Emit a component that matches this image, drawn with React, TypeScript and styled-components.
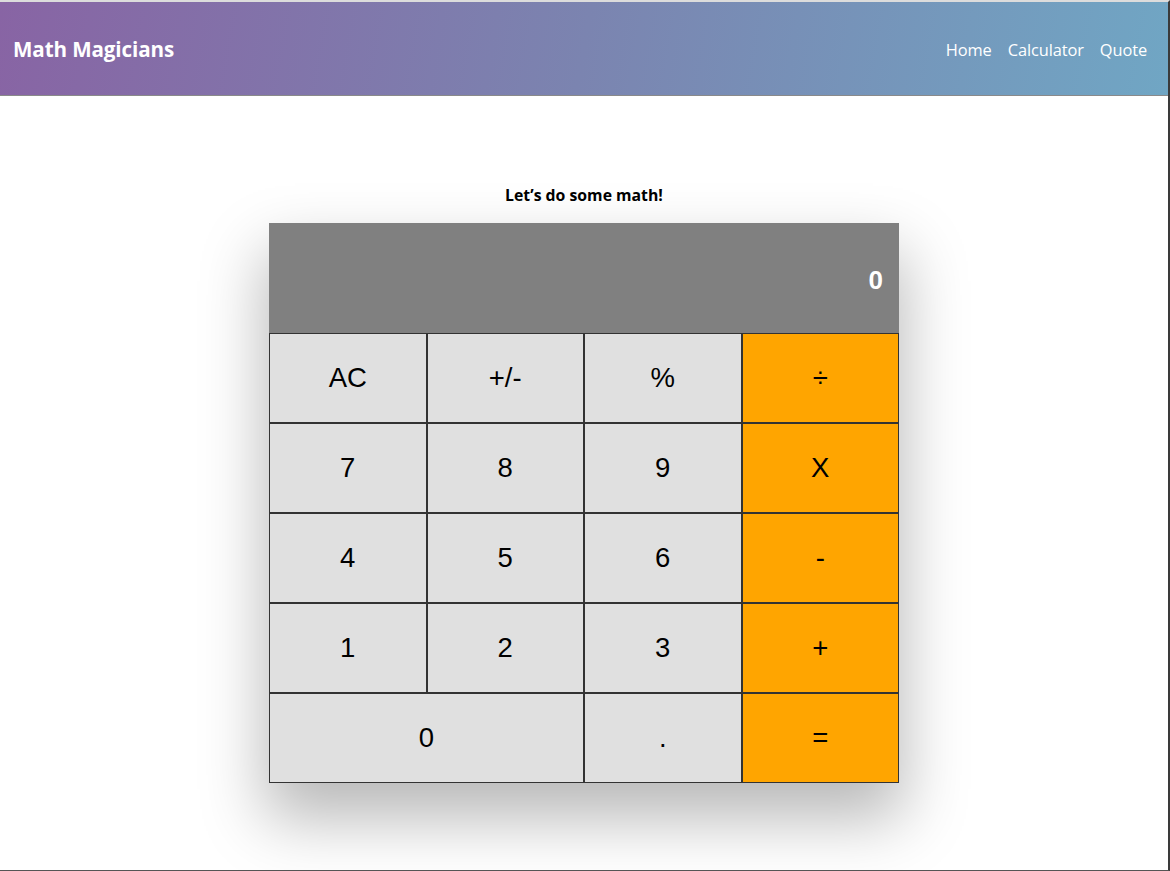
import React from "react";
import styled, { createGlobalStyle } from "styled-components";

const Global = createGlobalStyle`
  html, body { margin: 0; padding: 0; background: #fff; }
  body {
    font-family: "Open Sans", "Noto Sans", sans-serif;
    box-sizing: border-box;
    min-height: 871px;
    border-top: 2px solid #dcdcdc;
    border-right: 2px solid #3a3a3a;
    border-bottom: 1px solid #555;
  }
  *, *::before, *::after { box-sizing: border-box; }
`;

const Header = styled.header`
  height: 94px;
  display: flex;
  align-items: center;
  justify-content: space-between;
  padding: 1px 21px 0 13px;
  background: linear-gradient(100deg, #8864a4 0%, #7b84b0 50%, #70a6c4 100%);
  border-bottom: 1px solid #8a8a8a;
`;

const Logo = styled.h1`
  margin: 0;
  color: #fff;
  font-size: 20.6px;
  font-weight: 700;
  letter-spacing: -0.1px;
`;

const Nav = styled.nav`
  display: flex;
  gap: 16px;
`;

const NavLink = styled.a`
  color: #fff;
  font-size: 16.4px;
  text-decoration: none;
  letter-spacing: -0.1px;
`;

const Main = styled.main`
  display: flex;
  flex-direction: column;
  align-items: center;
  padding-top: 89px;
`;

const Title = styled.h2`
  margin: 0 0 18px;
  font-size: 15.8px;
  font-weight: 700;
  line-height: 20px;
  color: #000;
`;

const Calculator = styled.div`
  width: 630px;
  box-shadow: 0 32px 60px 4px rgba(0, 0, 0, 0.28);
`;

const Display = styled.div`
  height: 110px;
  background: #808080;
  color: #fff;
  display: flex;
  align-items: center;
  justify-content: flex-end;
  padding: 4px 16px 0 0;
  font-family: "Liberation Sans", Arial, sans-serif;
  font-weight: 700;
  font-size: 26px;
`;

const Keys = styled.div`
  display: grid;
  grid-template-columns: repeat(4, 1fr);
  grid-auto-rows: 90px;
`;

const Key = styled.button<{ $orange?: boolean; $wide?: boolean }>`
  border: 1px solid #333;
  margin: 0;
  padding: 0;
  background: ${(p) => (p.$orange ? "#ffa500" : "#e0e0e0")};
  grid-column: ${(p) => (p.$wide ? "span 2" : "auto")};
  font-family: "Liberation Sans", Arial, sans-serif;
  font-size: 27.5px;
  color: #000;
  cursor: pointer;
`;

const keys: { label: string; orange?: boolean; wide?: boolean }[] = [
  { label: "AC" },
  { label: "+/-" },
  { label: "%" },
  { label: "÷", orange: true },
  { label: "7" },
  { label: "8" },
  { label: "9" },
  { label: "X", orange: true },
  { label: "4" },
  { label: "5" },
  { label: "6" },
  { label: "-", orange: true },
  { label: "1" },
  { label: "2" },
  { label: "3" },
  { label: "+", orange: true },
  { label: "0", wide: true },
  { label: "." },
  { label: "=", orange: true },
];

export default function App() {
  return (
    <>
      <Global />
      <Header>
        <Logo>Math Magicians</Logo>
        <Nav>
          <NavLink href="#">Home</NavLink>
          <NavLink href="#">Calculator</NavLink>
          <NavLink href="#">Quote</NavLink>
        </Nav>
      </Header>
      <Main>
        <Title>Let’s do some math!</Title>
        <Calculator>
          <Display>0</Display>
          <Keys>
            {keys.map((k) => (
              <Key key={k.label} $orange={k.orange} $wide={k.wide}>
                {k.label}
              </Key>
            ))}
          </Keys>
        </Calculator>
      </Main>
    </>
  );
}
